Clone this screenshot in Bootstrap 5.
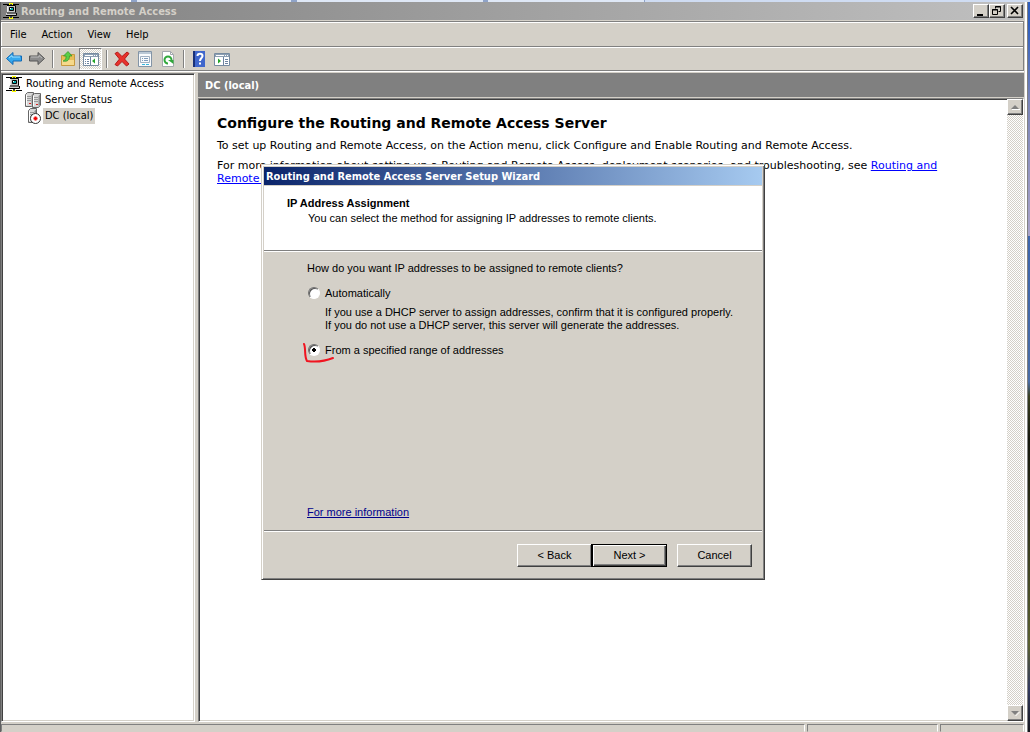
<!DOCTYPE html>
<html lang="en">
<head>
<meta charset="utf-8">
<meta name="viewport" content="width=device-width, initial-scale=1">
<title>Routing and Remote Access</title>
<link href="https://cdn.jsdelivr.net/npm/bootstrap@5.3.0/dist/css/bootstrap.min.css" rel="stylesheet">
<style>
:root { --face:#d4d0c8; --shade:#808080; --dark:#404040; }
body { font-family:"DejaVu Sans Condensed","DejaVu Sans",sans-serif; font-stretch:condensed; font-size:11px; line-height:16px; color:#000; background:var(--face); }
button { font:inherit; color:#000; }
.behind-tabs { height:2px; background:linear-gradient(90deg,#fff 0 131px,#8fa3c8 131px 137px,#dfe8f6 137px 291px,#8fa3c8 291px 297px,#dfe8f6 297px 483px,#8fa3c8 483px 488px,#dfe8f6 488px 644px,#8fa3c8 644px 645px,#cfdcf2 645px); }
.desktop { width:2px; background:linear-gradient(#2f5fc0 0 3%,#7c86b8 14%,#a9a3c8 32%,#3d66ae 32%,#4a6da6 52%,#3a4020 54%,#15170c 60%,#5a6030 88%,#333a60 94%,#14161c); }
.app-window { border-left:1px solid #606060; border-right:1px solid var(--shade); min-width:0; }
.app-body { border-right:2px solid #fff; min-height:0; min-width:0; padding-right:1px; }
.fill { min-width:0; min-height:0; }
.caption-bar { height:18px; background:linear-gradient(90deg,#808080,#c0c0c0); color:var(--face); padding:0 1px 0 2px; margin-bottom:1px; }
.win-title { font-family:"DejaVu Sans Condensed","DejaVu Sans",sans-serif; font-size:11px; font-weight:700; padding:1px 2px 0; }
.raised { background:var(--face); border:1px solid; border-color:#fff var(--dark) var(--dark) #fff; box-shadow:inset -1px -1px var(--shade); border-radius:0; padding:0; }
.cap-btn { width:16px; height:14px; }
.cap-close { margin-left:2px; }
.menu-strip { height:25px; border-top:1px solid var(--shade); box-shadow:inset 0 1px #fff,inset 1px 0 #fff; border-right:1px solid var(--shade); padding:1px 0 0 9px; gap:15px; }
.menu-strip a { color:#000; text-decoration:none; }
.tool-strip { height:25px; border-top:1px solid var(--shade); border-bottom:1px solid var(--shade); border-right:1px solid var(--shade); box-shadow:inset 0 1px #fff,inset 1px 0 #fff,0 1px #fff; padding-left:1px; margin-bottom:2px; }
.tool { width:23px; height:22px; border:0; background:none; padding:0; }
.tool svg { display:block; margin:0 auto; }
.tool.pressed { border:1px solid; border-color:var(--shade) #fff #fff var(--shade); background:repeating-conic-gradient(#fff 0 25%,#d4d0c8 0 50%) 0 0/2px 2px; }
.tool-sep { width:2px; height:18px; border-left:1px solid var(--shade); border-right:1px solid #fff; margin:0 2px 0 4px; }
.sunken { background:#fff; border:1px solid; border-color:var(--shade) #fff #fff var(--shade); box-shadow:inset 1px 1px var(--dark),inset -1px -1px var(--face); }
.tree-pane { width:194px; padding:2px 3px 2px 4px; }
.tree-item { height:16px; gap:2px; }
.tree-child { padding-left:19px; }
.tree-item span { padding:0 2px; line-height:16px; }
.picked { background:var(--face); }
.content-pane { margin-left:3px; }
.pane-title { height:24px; background:var(--shade); color:#fff; font-weight:700; padding:1px 7px 0; margin-bottom:1px; }
.scroll-track { width:16px; background:repeating-conic-gradient(#fff 0 25%,#d4d0c8 0 50%) 0 0/2px 2px; }
.scroll-track button { width:16px; height:16px; }
.doc { font-family:"DejaVu Sans",Verdana,sans-serif; font-stretch:normal; padding:15px 32px 0 18px; line-height:13px; }
.doc h1 { font-size:14px; line-height:18px; font-weight:700; margin:0 0 7px; }
.doc p { margin:0 0 7px; }
.doc a { color:#0000ff; }
.status-strip { height:10px; padding-top:2px; gap:2px; }
.status-strip div { border:1px solid; border-color:var(--shade) #fff transparent var(--shade); }
.status-mid { width:131px; }
.status-end { width:84px; }
.wizard { left:261px; top:164px; width:504px; background:var(--face); border:1px solid; border-color:var(--face) var(--dark) var(--dark) var(--face); box-shadow:inset 1px 1px #fff,inset -1px -1px var(--shade); padding:2px; font-family:"Liberation Sans",Arial,sans-serif; font-stretch:normal; line-height:13px; }
.wizard-title { height:18px; line-height:18px; background:linear-gradient(90deg,#0a246a,#a6caf0); color:#fff; margin-bottom:1px; }
.wizard-head { height:64px; background:#fff; padding:11px 23px 0; }
.wizard-head h2 { font-size:11px; line-height:13px; font-weight:700; margin:0 0 2px; }
.wizard-head p { margin:0 0 0 21px; }
.etched { height:2px; border-top:1px solid var(--shade); border-bottom:1px solid #fff; }
.wizard-body { height:278px; padding:10px 40px 11px 43px; }
.wizard-body p { margin:0; }
.wizard-body .choice-note { margin:6px 0 0 18px; }
.wizard-body a { color:#00008b; }
.choice { gap:5px; }
.choice input { appearance:none; width:12px; height:12px; margin:0 0 0 1px; border-radius:50%; border:1px solid; border-color:#707070 #fff #fff #707070; background:#fff; box-shadow:inset 1px 1px #555; }
.choice input:checked { background:radial-gradient(circle at 50% 50%,#000 0 2px,#fff 2px); }
.pen { left:-5px; top:1px; }
.wizard-foot { padding:12px 10px 10px; }
.wiz-btn { width:75px; height:23px; }
.wiz-btn.default { border-color:#000; box-shadow:-1px 0 #000,inset 1px 1px #fff,inset -1px -1px var(--dark),inset -2px -2px var(--shade); margin-right:10px; }
</style>
</head>
<body class="vh-100 d-flex flex-column overflow-hidden">
<svg class="d-none">
  <symbol id="net" viewBox="0 0 16 16">
    <path d="M0 1.500h16M0 14.500h16" stroke="#000"/><path d="M6 0h4v2H6zM6 14h4v2H6z" fill="#ff0"/><path d="M7 1h2v2H7zM7 13h2v2H7z" fill="#444"/>
    <path d="M4 2h9v8H4z" fill="#c8c8c8"/><path d="M4 2.500h8.500v7" fill="none" stroke="#000"/><path d="M4.500 3v6" stroke="#eee"/><path d="M6.500 4.500h4v3h-4z" fill="#0aa" stroke="#000"/><path d="M7 5h1v1H7z" fill="#fff"/><path d="M3 10h10v3H3z" fill="#d0d0d0"/><path d="M3 12.500h10.500V10M4 10h9" fill="none" stroke="#000"/>
  </symbol>
  <symbol id="server" viewBox="0 0 9 15">
    <path d="M.5 2.500 2.500.5h6v11.500l-2 2.500h-6z" fill="#d8d8d8" stroke="#666"/><path d="M6.500 3 8 1.500v10L6.500 13z" fill="#8c8c8c"/><path d="M2 4.500h4M2 6.500h4M2 8.500h4" stroke="#999"/><path d="M1 3h1v10H1z" fill="#fff"/><path d="M4 11h2v1H4z" fill="#d22"/>
  </symbol>
</svg>
<div class="behind-tabs flex-shrink-0"></div>
<div class="d-flex flex-grow-1 fill">
<div class="app-window d-flex flex-grow-1">
<div class="app-body d-flex flex-column flex-grow-1">
  <header class="caption-bar d-flex align-items-center flex-shrink-0">
    <svg width="16" height="16"><use href="#net"/></svg>
    <span class="win-title flex-grow-1">Routing and Remote Access</span>
    <button class="raised cap-btn d-flex" aria-label="Minimize"><svg width="14" height="12"><path d="M3 9h6v2H3z"/></svg></button>
    <button class="raised cap-btn d-flex" aria-label="Restore"><svg width="14" height="12"><path d="M5.500 3.500v-2h5v5h-2M5 2h6M2.500 4.500h5v5h-5zM2 5h6" fill="none" stroke="#000"/></svg></button>
    <button class="raised cap-btn cap-close d-flex" aria-label="Close"><svg width="14" height="12"><path d="m3 2 7 7M10 2 3 9" stroke="#000" stroke-width="1.600"/></svg></button>
  </header>
  <nav class="menu-strip d-flex align-items-center flex-shrink-0">
    <a href="#">File</a><a href="#">Action</a><a href="#">View</a><a href="#">Help</a>
  </nav>
  <div class="tool-strip d-flex align-items-center flex-shrink-0">
    <button class="tool" aria-label="Back"><svg width="16" height="16"><path d="M.5 7.500 7 1.500V5h8.500v5H7v3.500z" fill="#35a8ee" stroke="#1269b4"/><path d="M3 7 6 4.500V6h8" fill="none" stroke="#9ee0ff"/></svg></button>
    <button class="tool" aria-label="Forward"><svg width="16" height="16"><path d="M15.500 7.500 9 1.500V5H.5v5H9v3.500z" fill="#8c8c8c" stroke="#555"/><path d="M2 6h8V4.500L13 7" fill="none" stroke="#bbb"/></svg></button>
    <span class="tool-sep"></span>
    <button class="tool" aria-label="Up one level"><svg width="16" height="16"><path d="M1.500 4.500h6l1-1h6v11h-13z" fill="#e8bd55" stroke="#c79a40"/><path d="M2 9h12v5H2z" fill="#f6d98b"/><path d="M3 10c3-1 3-3 3-5H3.500L8 .5 12 5H9.500c0 4-2 6-6.500 5z" fill="#5bcf45" stroke="#2c8f2a" stroke-width=".7"/></svg></button>
    <button class="tool pressed" aria-label="Show console tree"><svg width="16" height="16"><path d="M.5 2.500h15v12H.5z" fill="#fff" stroke="#778ba0"/><path d="M1 3h14v3H1z" fill="#8d9fb3"/><path d="M2 4.500h8M11 4.500h1M13 4.500h1" stroke="#fff"/><path d="M7.500 6v8M2 8.500h1m1 0h2M2 10.500h1m1 0h2M2 12.500h1m1 0h2" stroke="#6d83a0"/><path d="M12 7.500v5L9 10z" fill="#25a52a"/></svg></button>
    <span class="tool-sep"></span>
    <button class="tool" aria-label="Delete"><svg width="16" height="16"><path d="M1 2.500 3.500 1 8 5.500 13 1l2 1.500L10.500 8l4.500 5-2.500 2L8 10.500 3.500 15 1 13.500 5.500 8z" fill="#e8322c" stroke="#b51a18"/></svg></button>
    <button class="tool" aria-label="Properties"><svg width="16" height="16"><path d="M1.500.5h13v15h-13z" fill="#f8fafc" stroke="#8394a6"/><path d="M2 1h12v2H2z" fill="#bac8d5"/><path d="M3.500 5.500h9v6h-9z" fill="none" stroke="#a0b0c2"/><path d="M5 7.500h1m1 0h4M5 9.500h1m1 0h4" stroke="#7d9bbb"/><path d="M5 13.500h3m1 0h3" stroke="#35b5dc"/></svg></button>
    <button class="tool" aria-label="Refresh"><svg width="16" height="16"><path d="M2.500.5h8l3 3v12h-11z" fill="#fff" stroke="#a4a8ae"/><path d="M10.500.5v3h3" fill="none" stroke="#a4a8ae"/><path d="M8 12.500A3.500 3.500 0 1 1 11.500 9" fill="none" stroke="#31a83b" stroke-width="2"/><path d="M8 9h5.500v4z" fill="#31a83b"/></svg></button>
    <span class="tool-sep"></span>
    <button class="tool" aria-label="Help"><svg width="16" height="16"><path d="M2 0h12v16H2z" fill="#3f66cc"/><path d="M2 0h2v16H2z" fill="#193078"/><path d="M6.500 5c0-3 5-3 5 0 0 2-2.500 2-2.500 5m0 1.500v2" fill="none" stroke="#fff" stroke-width="2"/></svg></button>
    <button class="tool" aria-label="Show action pane"><svg width="16" height="16"><path d="M.5 2.500h15v12H.5z" fill="#fff" stroke="#778ba0"/><path d="M1 3h14v3H1z" fill="#8d9fb3"/><path d="M2 4.500h8M11 4.500h1M13 4.500h1" stroke="#fff"/><path d="M9.500 6v8M11 8.500h3M11 10.500h3M11 12.500h3" stroke="#6d83a0"/><path d="M4 7.500v5L7 10z" fill="#25a52a"/></svg></button>
  </div>
  <div class="d-flex flex-grow-1 fill">
    <aside class="tree-pane sunken flex-shrink-0">
      <div class="tree-item d-flex align-items-center"><svg width="16" height="16"><use href="#net"/></svg><span>Routing and Remote Access</span></div>
      <div class="tree-item tree-child d-flex align-items-center"><svg width="16" height="16"><use href="#server" width="9" height="15"/><use href="#server" x="7" y="1" width="9" height="15"/></svg><span>Server Status</span></div>
      <div class="tree-item tree-child d-flex align-items-center"><svg width="16" height="16"><use href="#server" x="3" width="9" height="15"/><circle cx="10.500" cy="10.500" r="5" fill="#fff" stroke="#333"/><path d="M8.500 10.500h4M10.500 8.500v4" stroke="#e00" stroke-width="2"/></svg><span class="picked">DC (local)</span></div>
    </aside>
    <main class="content-pane d-flex flex-column flex-grow-1 fill">
      <div class="pane-title d-flex align-items-center flex-shrink-0">DC (local)</div>
      <div class="sunken d-flex flex-grow-1 fill">
        <article class="doc flex-grow-1">
          <h1>Configure the Routing and Remote Access Server</h1>
          <p>To set up Routing and Remote Access, on the Action menu, click Configure and Enable Routing and Remote Access.</p>
          <p>For more information about setting up a Routing and Remote Access, deployment scenarios, and troubleshooting, see <a href="#">Routing and Remote Access</a>.</p>
        </article>
        <div class="scroll-track d-flex flex-column justify-content-between flex-shrink-0">
          <button class="raised d-flex" aria-label="Scroll up"><svg width="14" height="14"><path d="M4 9.500h8" stroke="#fff"/><path d="M3 9h8L7 5z" fill="#808080"/></svg></button>
          <button class="raised d-flex" aria-label="Scroll down"><svg width="14" height="14"><path d="m7.500 10 4-4" stroke="#fff"/><path d="M3 5h8L7 9z" fill="#808080"/></svg></button>
        </div>
      </div>
    </main>
  </div>
  <footer class="status-strip d-flex flex-shrink-0">
    <div class="flex-grow-1"></div><div class="status-mid"></div><div class="status-end"></div>
  </footer>
</div>
</div>
<div class="desktop flex-shrink-0"></div>
</div>

<section class="wizard position-absolute" role="dialog" aria-labelledby="wizTitle">
  <div class="wizard-title win-title" id="wizTitle">Routing and Remote Access Server Setup Wizard</div>
  <div class="wizard-head">
    <h2>IP Address Assignment</h2>
    <p>You can select the method for assigning IP addresses to remote clients.</p>
  </div>
  <div class="etched"></div>
  <form class="wizard-body d-flex flex-column">
    <p>How do you want IP addresses to be assigned to remote clients?</p>
    <div class="choice d-flex align-items-start mt-2 pt-1"><input type="radio" name="assign" id="auto"><label for="auto">Automatically</label></div>
    <p class="choice-note text-nowrap">If you use a DHCP server to assign addresses, confirm that it is configured properly.<br>If you do not use a DHCP server, this server will generate the addresses.</p>
    <div class="choice d-flex align-items-start position-relative mt-2 pt-1"><input type="radio" name="assign" id="range" checked><label for="range">From a specified range of addresses</label>
      <svg class="pen position-absolute" width="36" height="26"><path d="M2 3c2 4 0 12 3 17 7 1 16 1 26-3" fill="none" stroke="#f01420" stroke-width="2" stroke-linecap="round"/></svg></div>
    <p class="mt-auto"><a href="#">For more information</a></p>
  </form>
  <div class="etched"></div>
  <div class="wizard-foot d-flex justify-content-end">
    <button class="raised wiz-btn">&lt; Back</button><button class="raised wiz-btn default">Next &gt;</button><button class="raised wiz-btn">Cancel</button>
  </div>
</section>
<script src="https://cdn.jsdelivr.net/npm/bootstrap@5.3.0/dist/js/bootstrap.bundle.min.js"></script>
</body>
</html>
